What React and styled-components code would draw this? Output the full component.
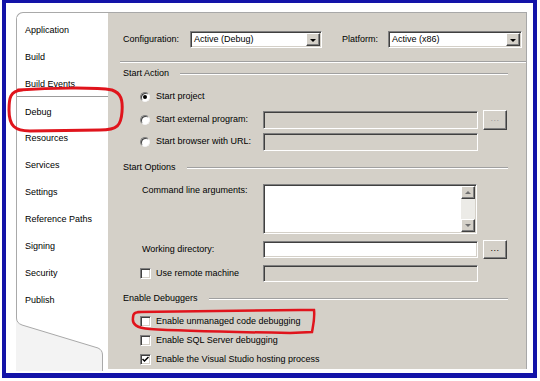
import styled, { createGlobalStyle } from "styled-components";

const GlobalStyle = createGlobalStyle`
  html, body {
    margin: 0;
    padding: 0;
    background: #fff;
  }
  body {
    font-family: "Liberation Sans", Arial, sans-serif;
    font-size: 9px;
    color: #000;
  }
`;

const Page = styled.div`
  position: relative;
  width: 540px;
  height: 381px;
  overflow: hidden;
  background: #fff;
`;

const Frame = styled.div`
  box-sizing: border-box;
  margin-left: 2px;
  width: 535px;
  height: 378px;
  border: 4px solid #1313a8;
  border-top-width: 3px;
  border-bottom-width: 5px;
  padding: 9px 6px 4px 10px;
  display: flex;
  background: #fff;
`;

const TabColumn = styled.div`
  width: 92px;
  flex-shrink: 0;
  display: flex;
  flex-direction: column;
`;

const TabList = styled.div`
  padding-top: 3.5px;
  border-top: 1px solid #a9a9a9;
  border-left: 1px solid #a9a9a9;
  border-top-left-radius: 7px;
  background: #fff;
`;

const Tab = styled.div`
  box-sizing: border-box;
  height: ${(p) => (p.$active ? "33px" : "27px")};
  margin: ${(p) => (p.$active ? "-2px 0 -4px" : "0")};
  display: flex;
  align-items: center;
  padding-left: 8px;
  line-height: 13px;
  white-space: nowrap;
  border-top: ${(p) => (p.$active ? "1px solid #9c9c9c" : "none")};
  border-bottom: ${(p) => (p.$active ? "1px solid #9c9c9c" : "none")};
  position: relative;
  background: #fff;
`;

const TabFoot = styled.div`
  flex: 1;
  background: #f3f3f3;
  svg {
    display: block;
    width: 100%;
    height: 100%;
  }
`;

const Panel = styled.div`
  flex: 1;
  display: flex;
  flex-direction: column;
  background: #d4d0c8;
  border-top: 1px solid #a8a8a8;
  border-right: 1px solid #a8a8a8;
  padding: 18px 4px 0 15px;
  overflow: hidden;
`;

const TopBar = styled.div`
  display: flex;
  align-items: center;
  height: 17px;
`;

const BarLabel = styled.span`
  width: ${(p) => p.$w}px;
  margin-left: ${(p) => p.$ml || 0}px;
  line-height: 13px;
  white-space: nowrap;
`;

const Select = styled.div`
  box-sizing: border-box;
  width: ${(p) => p.$w}px;
  height: 17px;
  display: flex;
  background: #fff;
  border: 1px solid;
  border-color: #808080 #fff #fff #808080;
  box-shadow: inset 1px 1px 0 #404040, inset -1px -1px 0 #d4d0c8;
  padding: 1px;
`;

const SelectValue = styled.span`
  flex: 1;
  padding-left: 2px;
  line-height: 13px;
  white-space: nowrap;
`;

const DropButton = styled.span`
  box-sizing: border-box;
  width: 14px;
  display: flex;
  align-items: center;
  justify-content: center;
  background: #d4d0c8;
  border: 1px solid;
  border-color: #fff #404040 #404040 #fff;
  box-shadow: inset -1px -1px 0 #808080;
  &::after {
    content: "";
    border-left: 3px solid transparent;
    border-right: 3px solid transparent;
    border-top: 3px solid #000;
    margin-top: 1px;
  }
`;

const Etched = styled.div`
  height: 0;
  border-top: 1px solid #a0a0a0;
  border-bottom: 1px solid #fff;
`;

const TopRule = styled(Etched)`
  margin: 13px -4px 0 -3px;
`;

const SectionHeader = styled.div`
  display: flex;
  align-items: center;
  height: 13px;
  line-height: 13px;
  margin-top: ${(p) => p.$mt}px;
  margin-right: 14px;
  white-space: nowrap;
`;

const HeaderRule = styled(Etched)`
  flex: 1;
  margin-left: 11px;
`;

const FormRow = styled.div`
  display: grid;
  grid-template-columns: 135px 215px 24px;
  column-gap: 5px;
  align-items: center;
  height: ${(p) => p.$h}px;
  margin-top: ${(p) => p.$mt}px;
`;

const RowLabel = styled.div`
  display: flex;
  align-items: center;
  gap: ${(p) => p.$gap || 5}px;
  padding-left: ${(p) => p.$indent}px;
  align-self: ${(p) => (p.$top ? "start" : "center")};
  line-height: 13px;
  white-space: nowrap;
`;

const Field = styled.div`
  box-sizing: border-box;
  height: ${(p) => p.$h || 17}px;
  background: ${(p) => (p.$disabled ? "#d4d0c8" : "#fff")};
  border: 1px solid;
  border-color: #808080 #fff #fff #808080;
  box-shadow: inset 1px 1px 0 #404040, inset -1px -1px 0 #d4d0c8;
`;

const TextArea = styled(Field)`
  display: flex;
  justify-content: flex-end;
  padding: 1px;
  width: 214px;
`;

const ScrollBar = styled.div`
  width: 14px;
  display: flex;
  flex-direction: column;
  background: #ecebe7;
`;

const ScrollTrack = styled.div`
  flex: 1;
`;

const ScrollButton = styled.div`
  box-sizing: border-box;
  height: 13px;
  display: flex;
  align-items: center;
  justify-content: center;
  background: #d4d0c8;
  border: 1px solid;
  border-color: #fff #404040 #404040 #fff;
  box-shadow: inset -1px -1px 0 #808080;
  &::after {
    content: "";
    border-left: 3px solid transparent;
    border-right: 3px solid transparent;
    ${(p) =>
      p.$up
        ? "border-bottom: 3px solid #707070;"
        : "border-top: 3px solid #707070;"}
  }
`;

const BrowseButton = styled.div`
  box-sizing: border-box;
  height: ${(p) => p.$h || 19}px;
  display: flex;
  align-items: center;
  justify-content: center;
  background: #d4d0c8;
  border: 1px solid;
  border-color: #fff #404040 #404040 #fff;
  box-shadow: inset -1px -1px 0 #808080;
  color: ${(p) => (p.$disabled ? "#9a9a9a" : "#000")};
  letter-spacing: 0.5px;
  line-height: 13px;
  padding-bottom: 2px;
`;

const Radio = styled.span`
  box-sizing: border-box;
  width: 10px;
  height: 10px;
  flex-shrink: 0;
  border-radius: 50%;
  background: #fff;
  border: 1px solid;
  border-color: #808080 #f4f4f4 #f4f4f4 #808080;
  box-shadow: inset 1px 1px 0 #404040;
  display: flex;
  align-items: center;
  justify-content: center;
  &::after {
    content: "";
    display: ${(p) => (p.$checked ? "block" : "none")};
    width: 4px;
    height: 4px;
    border-radius: 50%;
    background: #000;
  }
`;

const CheckRow = styled.div`
  display: flex;
  align-items: center;
  gap: 5px;
  height: 19px;
  padding-left: 17px;
  margin-top: ${(p) => p.$mt || 0}px;
  line-height: 13px;
  white-space: nowrap;
`;

const Box = styled.span`
  box-sizing: border-box;
  width: 11px;
  height: 11px;
  flex-shrink: 0;
  background: #fff;
  border: 1px solid;
  border-color: #808080 #fff #fff #808080;
  box-shadow: inset 1px 1px 0 #404040, inset -1px -1px 0 #d4d0c8;
  display: flex;
  align-items: center;
  justify-content: center;
`;

const Overlay = styled.svg`
  position: absolute;
  left: 0;
  top: 0;
  pointer-events: none;
`;

function Checkbox({ checked }) {
  return (
    <Box>
      {checked && (
        <svg width="7" height="7" viewBox="0 0 7 7">
          <path d="M0.5 3 L2.5 5 L6.5 1" fill="none" stroke="#000" strokeWidth="1.5" />
        </svg>
      )}
    </Box>
  );
}

const tabs = [
  "Application",
  "Build",
  "Build Events",
  "Debug",
  "Resources",
  "Services",
  "Settings",
  "Reference Paths",
  "Signing",
  "Security",
  "Publish",
];

export default function App() {
  return (
    <Page>
      <GlobalStyle />
      <Frame>
        <TabColumn>
          <TabList>
            {tabs.map((t) => (
              <Tab key={t} $active={t === "Debug"}>
                {t}
              </Tab>
            ))}
          </TabList>
          <TabFoot>
            <svg viewBox="0 0 92 57" preserveAspectRatio="none">
              <path d="M0 0 L0.5 0 L0.5 4 Q0.5 9 6 11 L82 34 Q86.5 36 86.5 41 L86.5 57 L92 57 L92 0 Z" fill="#fff" />
              <path d="M0.5 0 L0.5 4 Q0.5 9 6 11 L82 34 Q86.5 36 86.5 41 L86.5 57" fill="none" stroke="#a9a9a9" strokeWidth="1" />
            </svg>
          </TabFoot>
        </TabColumn>

        <Panel>
          <TopBar>
            <BarLabel $w={67}>Configuration:</BarLabel>
            <Select $w={132}>
              <SelectValue>Active (Debug)</SelectValue>
              <DropButton />
            </Select>
            <BarLabel $w={46} $ml={20}>Platform:</BarLabel>
            <Select $w={134}>
              <SelectValue>Active (x86)</SelectValue>
              <DropButton />
            </Select>
          </TopBar>
          <TopRule />

          <SectionHeader $mt={4}>
            Start Action
            <HeaderRule />
          </SectionHeader>
          <FormRow $h={18} $mt={8}>
            <RowLabel $indent={17} $gap={6}>
              <Radio $checked />
              Start project
            </RowLabel>
          </FormRow>
          <FormRow $h={18} $mt={4}>
            <RowLabel $indent={17} $gap={6}>
              <Radio />
              Start external program:
            </RowLabel>
            <Field $h={18} $disabled />
            <BrowseButton $h={20} $disabled>...</BrowseButton>
          </FormRow>
          <FormRow $h={18} $mt={5}>
            <RowLabel $indent={17} $gap={6}>
              <Radio />
              Start browser with URL:
            </RowLabel>
            <Field $h={18} $disabled />
          </FormRow>

          <SectionHeader $mt={10.5}>
            Start Options
            <HeaderRule />
          </SectionHeader>
          <FormRow $h={50} $mt={9.5}>
            <RowLabel $indent={19} $top>Command line arguments:</RowLabel>
            <TextArea $h={50}>
              <ScrollBar>
                <ScrollButton $up />
                <ScrollTrack />
                <ScrollButton />
              </ScrollBar>
            </TextArea>
          </FormRow>
          <FormRow $h={19} $mt={6}>
            <RowLabel $indent={19}>Working directory:</RowLabel>
            <Field $h={17} />
            <BrowseButton $h={19}>...</BrowseButton>
          </FormRow>
          <FormRow $h={18} $mt={6}>
            <RowLabel $indent={17}>
              <Checkbox />
              Use remote machine
            </RowLabel>
            <Field $h={17} $disabled />
          </FormRow>

          <SectionHeader $mt={9.5}>
            Enable Debuggers
            <HeaderRule />
          </SectionHeader>
          <CheckRow $mt={7}>
            <Checkbox />
            Enable unmanaged code debugging
          </CheckRow>
          <CheckRow>
            <Checkbox />
            Enable SQL Server debugging
          </CheckRow>
          <CheckRow>
            <Checkbox checked />
            Enable the Visual Studio hosting process
          </CheckRow>
        </Panel>
      </Frame>

      <Overlay width="540" height="381" viewBox="0 0 540 381">
        <path
          d="M18 90 C50 88 95 87 112 90 C121 93 123 100 122 112 C121 125 118 130 100 130 L30 131 C15 131 9 126 9 110 C9 98 10 91 22 90"
          fill="none"
          stroke="#e0141c"
          strokeWidth="3"
          strokeLinecap="round"
        />
        <path
          d="M138 312 L300 310 L314 310 C315 318 313 326 312 332 L290 333 C230 332 180 331 150 329 C136 328 132 324 133 318 C133 313 135 312 142 312"
          fill="none"
          stroke="#e0141c"
          strokeWidth="2.5"
          strokeLinecap="round"
        />
      </Overlay>
    </Page>
  );
}
